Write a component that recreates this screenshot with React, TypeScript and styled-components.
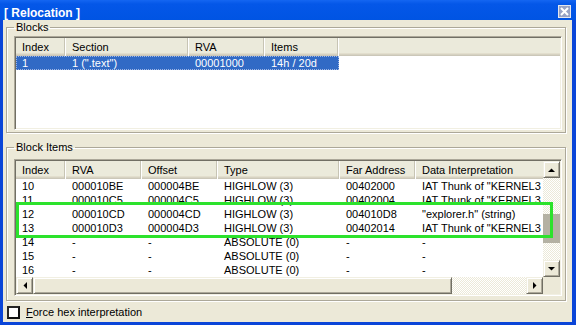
import React from 'react';
import styled, { createGlobalStyle } from 'styled-components';

const GlobalStyle = createGlobalStyle`
  html, body { margin: 0; padding: 0; background: #ECE9D8; }
  body { font-family: "Liberation Sans", Arial, sans-serif; font-size: 11px; color: #000; }
  * { box-sizing: border-box; }
`;

const Window = styled.div`
  width: 576px;
  height: 325px;
  display: flex;
  flex-direction: column;
  overflow: hidden;
  background: #0A45D8;
`;

const TitleBar = styled.div`
  height: 20px;
  flex: none;
  display: flex;
  align-items: flex-start;
  justify-content: space-between;
  padding: 0 5px 0 4px;
  background: linear-gradient(#1466F2 0%, #0457E8 20%, #0054E3 100%);
`;

const TitleText = styled.div`
  margin-top: 6px;
  font-family: "Liberation Sans", Arial, sans-serif;
  font-weight: bold;
  font-size: 12px;
  line-height: 14px;
  color: #fff;
  white-space: nowrap;
`;

const CloseButton = styled.div`
  margin-top: 5px;
  width: 13px;
  height: 13px;
  border: 1px solid #E4E6EE;
  background: #98A3C4;
  display: flex;
  align-items: center;
  justify-content: center;
`;

const Frame = styled.div`
  flex: 1;
  display: flex;
  flex-direction: column;
  background: #ECE9D8;
  border-style: solid;
  border-color: #0A45D8;
  border-width: 0 4px 3px 3px;
  padding: 0 6px 0 3px;
`;

const GroupBox = styled.fieldset<{ $padTop: number; $padBottom: number; $gapAbove: number }>`
  margin: ${p => p.$gapAbove}px 0 0 0;
  padding: ${p => p.$padTop}px 3px ${p => p.$padBottom}px 7px;
  border: 1px solid #ACA899;
  box-shadow: inset 1px 1px 0 #fff, 1px 1px 0 #fff;
  min-width: 0;
`;

const Legend = styled.legend`
  padding: 0 2px;
  font-size: 11px;
  line-height: 14px;
  color: #000;
`;

const ListFrame = styled.div<{ $height: number; $scroll?: boolean }>`
  position: relative;
  height: ${p => p.$height}px;
  background: #fff;
  border: 1px solid;
  border-color: #ACA899 #fff #fff #ACA899;
  box-shadow: inset 1px 1px 0 #716F64, inset -1px -1px 0 #F1EFE2;
  padding: 1px;
  display: grid;
  grid-template-columns: ${p => (p.$scroll ? '1fr 17px' : '1fr')};
  grid-template-rows: ${p => (p.$scroll ? '1fr 17px' : '1fr')};
`;

const ListArea = styled.div`
  overflow: hidden;
  min-width: 0;
  background: #fff;
`;

const HeaderRow = styled.div`
  display: flex;
  height: 18px;
  background: #EBEADB;
  box-shadow: inset 0 -1px 0 #CBC7B8, inset 0 -2px 0 #D6D2C2, inset 0 -3px 0 #E2DECD;
`;

const HeaderCell = styled.div<{ $w: number }>`
  flex: none;
  width: ${p => p.$w}px;
  padding: 0 0 1px 6px;
  display: flex;
  align-items: center;
  white-space: nowrap;
  overflow: hidden;
  border-right: 1px solid #fff;
  box-shadow: inset -1px 0 0 #C7C4B4;
`;

const HeaderFiller = styled.div`
  flex: 1;
`;

const Row = styled.div<{ $selected?: boolean }>`
  display: flex;
  width: max-content;
  height: 14px;
  line-height: 14px;
  background: ${p => (p.$selected ? '#316AC5' : 'transparent')};
  color: ${p => (p.$selected ? '#fff' : '#000')};
  outline: ${p => (p.$selected ? '1px dotted #9FB6E4' : 'none')};
  outline-offset: -1px;
`;

const Cell = styled.div<{ $w: number }>`
  flex: none;
  width: ${p => p.$w}px;
  padding-left: 6px;
  white-space: nowrap;
  overflow: hidden;
`;

const VScroll = styled.div`
  display: flex;
  flex-direction: column;
  background: repeating-conic-gradient(#fff 0 25%, #ECE9D8 0 50%) 0 0 / 2px 2px;
`;

const HScroll = styled.div`
  display: flex;
  background: repeating-conic-gradient(#fff 0 25%, #ECE9D8 0 50%) 0 0 / 2px 2px;
`;

const ScrollButton = styled.div`
  flex: none;
  width: 17px;
  height: 17px;
  background: #ECE9D8;
  border: 1px solid;
  border-color: #F1EFE2 #716F64 #716F64 #F1EFE2;
  box-shadow: inset 1px 1px 0 #fff, inset -1px -1px 0 #ACA899;
  display: flex;
  align-items: center;
  justify-content: center;
`;

const VTrack = styled.div`
  flex: 1;
  display: flex;
  flex-direction: column;
`;

const VThumb = styled.div<{ $offset: number; $size: number }>`
  margin-top: ${p => p.$offset}px;
  height: ${p => p.$size}px;
  background: #B4B1A3;
`;

const HThumb = styled.div<{ $size: number }>`
  flex: none;
  width: ${p => p.$size}px;
  height: 17px;
  background: #ECE9D8;
  border: 1px solid;
  border-color: #F1EFE2 #716F64 #716F64 #F1EFE2;
  box-shadow: inset 1px 1px 0 #fff, inset -1px -1px 0 #ACA899;
`;

const HTrack = styled.div`
  flex: 1;
`;

const Corner = styled.div`
  background: #ECE9D8;
`;

const Highlight = styled.div`
  position: absolute;
  left: 1px;
  top: 42px;
  width: 537px;
  height: 36px;
  border: 3px solid #2CE22C;
  pointer-events: none;
`;

const CheckRow = styled.div`
  margin-top: 5px;
  margin-left: 1px;
  display: flex;
  align-items: center;
  gap: 6px;
  height: 13px;
`;

const CheckBox = styled.div`
  width: 13px;
  height: 13px;
  background: #fff;
  border: 2px solid;
  border-color: #262626 #111 #111 #262626;
`;

const CheckLabel = styled.span`
  font-size: 11px;
  line-height: 13px;
  white-space: nowrap;
`;

const Accel = styled.span`
  text-decoration: underline;
`;

const Arrow = ({ dir }: { dir: 'up' | 'down' | 'left' | 'right' }) => {
  const pts: Record<string, string> = {
    up: '0,5 7,5 3.5,1.5',
    down: '0,1 7,1 3.5,4.5',
    left: '5,0 5,7 1.5,3.5',
    right: '1,0 1,7 4.5,3.5',
  };
  const vertical = dir === 'up' || dir === 'down';
  return (
    <svg width={vertical ? 7 : 6} height={vertical ? 6 : 7} viewBox={vertical ? '0 0 7 6' : '0 0 6 7'}>
      <polygon points={pts[dir]} fill="#000" />
    </svg>
  );
};

const blockCols = [50, 123, 76, 74];
const blockHead = ['Index', 'Section', 'RVA', 'Items'];
const blockRows = [['1', '1 (".text")', '00001000', '14h / 20d']];

const itemCols = [50, 76, 76, 122, 76, 140];
const itemHead = ['Index', 'RVA', 'Offset', 'Type', 'Far Address', 'Data Interpretation'];
const itemRows = [
  ['10', '000010BE', '000004BE', 'HIGHLOW (3)', '00402000', 'IAT Thunk of "KERNEL3'],
  ['11', '000010C5', '000004C5', 'HIGHLOW (3)', '00402004', 'IAT Thunk of "KERNEL3'],
  ['12', '000010CD', '000004CD', 'HIGHLOW (3)', '004010D8', '"explorer.h" (string)'],
  ['13', '000010D3', '000004D3', 'HIGHLOW (3)', '00402014', 'IAT Thunk of "KERNEL3'],
  ['14', '-', '-', 'ABSOLUTE (0)', '-', '-'],
  ['15', '-', '-', 'ABSOLUTE (0)', '-', '-'],
  ['16', '-', '-', 'ABSOLUTE (0)', '-', '-'],
];

export default function App() {
  return (
    <>
      <GlobalStyle />
      <Window>
        <TitleBar>
          <TitleText>[ Relocation ]</TitleText>
          <CloseButton>
            <svg width="9" height="9" viewBox="0 0 9 9">
              <path d="M1 1 L8 8 M8 1 L1 8" stroke="#fff" strokeWidth="2" />
            </svg>
          </CloseButton>
        </TitleBar>
        <Frame>
          <GroupBox $padTop={2} $padBottom={2} $gapAbove={0}>
            <Legend>Blocks</Legend>
            <ListFrame $height={94}>
              <ListArea>
                <HeaderRow>
                  {blockHead.map((h, i) => (
                    <HeaderCell key={h} $w={blockCols[i]}>{h}</HeaderCell>
                  ))}
                  <HeaderFiller />
                </HeaderRow>
                {blockRows.map((r, ri) => (
                  <Row key={ri} $selected>
                    {r.map((c, i) => (
                      <Cell key={i} $w={blockCols[i]}>{c}</Cell>
                    ))}
                  </Row>
                ))}
              </ListArea>
            </ListFrame>
          </GroupBox>
          <GroupBox $padTop={5} $padBottom={4} $gapAbove={7}>
            <Legend>Block Items</Legend>
            <ListFrame $height={137} $scroll>
              <ListArea>
                <HeaderRow>
                  {itemHead.map((h, i) => (
                    <HeaderCell key={h} $w={itemCols[i]}>{h}</HeaderCell>
                  ))}
                </HeaderRow>
                {itemRows.map((r, ri) => (
                  <Row key={ri}>
                    {r.map((c, i) => (
                      <Cell key={i} $w={itemCols[i]}>{c}</Cell>
                    ))}
                  </Row>
                ))}
              </ListArea>
              <VScroll>
                <ScrollButton><Arrow dir="up" /></ScrollButton>
                <VTrack>
                  <VThumb $offset={36} $size={29} />
                </VTrack>
                <ScrollButton><Arrow dir="down" /></ScrollButton>
              </VScroll>
              <HScroll>
                <ScrollButton><Arrow dir="left" /></ScrollButton>
                <HThumb $size={419} />
                <HTrack />
                <ScrollButton><Arrow dir="right" /></ScrollButton>
              </HScroll>
              <Corner />
              <Highlight />
            </ListFrame>
          </GroupBox>
          <CheckRow>
            <CheckBox />
            <CheckLabel><Accel>F</Accel>orce hex interpretation</CheckLabel>
          </CheckRow>
        </Frame>
      </Window>
    </>
  );
}
